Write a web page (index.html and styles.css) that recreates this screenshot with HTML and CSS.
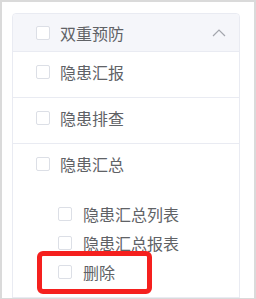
FILE: index.html
```html
<!DOCTYPE html>
<html lang="zh-CN">
<head>
<meta charset="utf-8">
<link rel="stylesheet" href="styles.css">
</head>
<body>
<div class="frame">
  <div class="card">
    <div class="head">
      <span class="cb"></span>
      <span class="label">双重预防</span>
      <svg class="chev" width="14" height="8" viewBox="0 0 14 8"><polyline points="1,7 7,1 13,7" fill="none" stroke="#a3a6ad" stroke-width="1.2"/></svg>
    </div>
    <div class="row">
      <div class="line"><span class="cb"></span><span class="label">隐患汇报</span></div>
    </div>
    <div class="row">
      <div class="line"><span class="cb"></span><span class="label">隐患排查</span></div>
    </div>
    <div class="row">
      <div class="line"><span class="cb"></span><span class="label">隐患汇总</span></div>
      <div class="children">
        <div class="line child"><span class="cb"></span><span class="label">隐患汇总列表</span></div>
        <div class="line child"><span class="cb"></span><span class="label">隐患汇总报表</span></div>
        <div class="line child marked"><span class="cb"></span><span class="label">删除</span><span class="redbox"></span></div>
      </div>
    </div>
  </div>
</div>
</body>
</html>
```
FILE: styles.css
```css
html, body {
  margin: 0;
  padding: 0;
  background: #fff;
}
.frame {
  box-sizing: border-box;
  width: 256px;
  height: 299px;
  border: 2px solid #dadada;
  border-bottom-width: 1px;
  padding: 11px 0 0 10px;
  overflow: hidden;
  font-family: "Noto Sans CJK SC", "Noto Sans", sans-serif;
  font-size: 16px;
  color: #606266;
}
.card {
  box-sizing: border-box;
  width: 228px;
  height: 400px;
  border: 1px solid #e9ebf2;
  border-radius: 4px;
  background: #fff;
}
.head {
  display: flex;
  align-items: center;
  height: 37px;
  padding-left: 23px;
  padding-right: 13px;
  background: #f5f6fa;
  border-bottom: 1px solid #e9ebf2;
  border-radius: 4px 4px 0 0;
}
.head .label {
  flex: 1;
}
.chev {
  display: block;
}
.cb {
  box-sizing: border-box;
  width: 14px;
  height: 14px;
  border: 1px solid #dcdfe6;
  border-radius: 2px;
  background: #fff;
  margin-right: 10px;
  flex: none;
}
.row {
  padding: 9px 0 14px 23px;
  border-bottom: 1px solid #e9ebf2;
}
.line {
  display: flex;
  align-items: center;
  height: 22px;
  line-height: 22px;
}
.children {
  padding-top: 28px;
  padding-left: 22px;
  display: flex;
  flex-direction: column;
  gap: 7px;
}
.child .cb {
  margin-right: 11px;
}
.marked {
  position: relative;
}
.redbox {
  position: absolute;
  left: -21px;
  top: -10px;
  width: 115px;
  height: 43px;
  box-sizing: border-box;
  border: 5px solid #f5201e;
  border-radius: 6px;
}
```
